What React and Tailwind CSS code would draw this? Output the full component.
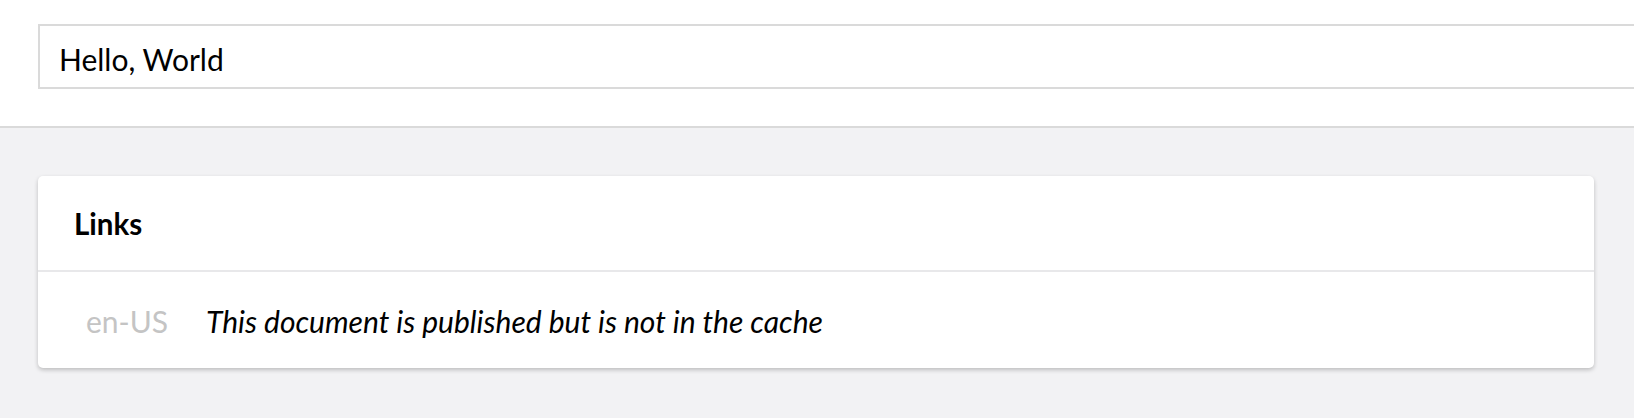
export default function App() {
  return (
    <div className="min-h-screen bg-[#f2f2f4] font-['Lato','Liberation_Sans',sans-serif] text-black">
      {/* Title bar */}
      <div className="overflow-hidden bg-white border-b-2 border-[#dadada] pt-[24px] pb-[37px] pl-[38px]">
        <div className="w-[1660px] h-[65px] border-2 border-[#dadada] flex items-center pl-[19px] pt-[5px] text-[30px]">
          Hello, World
        </div>
      </div>

      {/* Links card */}
      <div className="pl-[38px] pr-[40px] pt-[48px]">
        <div className="bg-white rounded-[5px] shadow-[0_2px_4px_rgba(0,0,0,0.22)]">
          <div className="h-[96px] flex items-center pl-[36px] pt-[2px] border-b-2 border-[#e8e8ea] text-[29.5px] font-bold">
            Links
          </div>
          <div className="h-[96px] flex items-center pl-[48px] pt-[3px] gap-[38px] text-[30px]">
            <span className="text-[#c4c4c4]">en-US</span>
            <span className="italic">This document is published but is not in the cache</span>
          </div>
        </div>
      </div>
    </div>
  );
}
